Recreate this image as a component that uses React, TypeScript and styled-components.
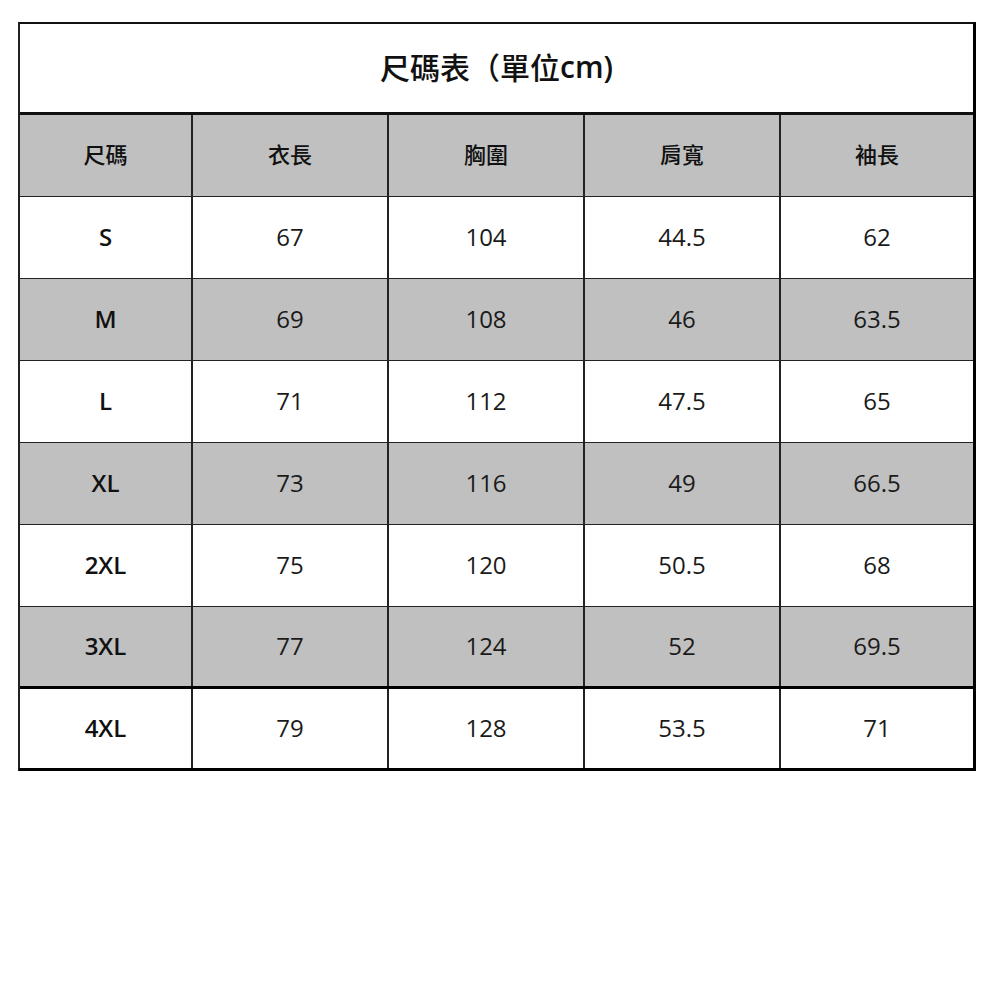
import React from "react";
import styled, { createGlobalStyle } from "styled-components";

const Global = createGlobalStyle`
  html, body { margin: 0; padding: 0; background: #ffffff; }
  body { font-family: "Open Sans", "Noto Sans CJK TC", sans-serif; color: #111; }
`;

const Page = styled.div`
  padding: 22px 24px 0 18px;
`;

const Table = styled.div`
  box-sizing: border-box;
  width: 958px;
  border-top: 2px solid #111;
  border-left: 2px solid #222;
  border-right: 3px solid #000;
  border-bottom: 3px solid #000;
  display: flex;
  flex-direction: column;
`;

const Title = styled.div`
  box-sizing: border-box;
  height: 91px;
  border-bottom: 3px solid #111;
  display: flex;
  align-items: center;
  justify-content: center;
  font-family: "Open Sans", "Noto Sans CJK TC", sans-serif;
  font-size: 30px;
  font-weight: 500;
  color: #111;
  padding-bottom: 4px;
`;

const Unit = styled.span`
  font-family: "Open Sans", sans-serif;
  font-weight: 600;
`;

const Row = styled.div<{ $shade?: boolean; $thick?: boolean; $last?: boolean }>`
  box-sizing: border-box;
  display: grid;
  grid-template-columns: 171px 196px 196px 196px 1fr;
  height: ${(p) => (p.$last ? "79px" : "82px")};
  background: ${(p) => (p.$shade ? "#c0c0c0" : "#ffffff")};
  border-bottom: ${(p) => (p.$last ? "none" : p.$thick ? "3px solid #000" : "1px solid #222")};
`;

const Cell = styled.div<{ $first?: boolean; $kind?: "head" | "size" | "num" }>`
  display: flex;
  align-items: center;
  justify-content: center;
  border-left: ${(p) => (p.$first ? "none" : "2px solid #222")};
  font-family: ${(p) =>
    p.$kind === "head" ? '"Noto Sans CJK TC", sans-serif' : '"Open Sans", "Noto Sans CJK TC", sans-serif'};
  font-size: ${(p) => (p.$kind === "head" ? "22px" : "24px")};
  font-weight: ${(p) => (p.$kind === "num" ? 400 : p.$kind === "head" ? 500 : 600)};
  color: ${(p) => (p.$kind === "num" ? "#1a1a1a" : "#111")};
  padding-bottom: ${(p) => (p.$kind === "head" ? "5px" : "2px")};
`;

const headers = ["尺碼", "衣長", "胸圍", "肩寬", "袖長"];
const rows: string[][] = [
  ["S", "67", "104", "44.5", "62"],
  ["M", "69", "108", "46", "63.5"],
  ["L", "71", "112", "47.5", "65"],
  ["XL", "73", "116", "49", "66.5"],
  ["2XL", "75", "120", "50.5", "68"],
  ["3XL", "77", "124", "52", "69.5"],
  ["4XL", "79", "128", "53.5", "71"],
];

export default function App() {
  return (
    <>
      <Global />
      <Page>
        <Table>
          <Title>
            尺碼表（單位<Unit>cm)</Unit>
          </Title>
          <Row $shade>
            {headers.map((h, i) => (
              <Cell key={h} $first={i === 0} $kind="head">
                {h}
              </Cell>
            ))}
          </Row>
          {rows.map((r, ri) => (
            <Row
              key={r[0]}
              $shade={ri % 2 === 1}
              $thick={ri === rows.length - 2}
              $last={ri === rows.length - 1}
            >
              {r.map((v, i) => (
                <Cell key={i} $first={i === 0} $kind={i === 0 ? "size" : "num"}>
                  {v}
                </Cell>
              ))}
            </Row>
          ))}
        </Table>
      </Page>
    </>
  );
}
